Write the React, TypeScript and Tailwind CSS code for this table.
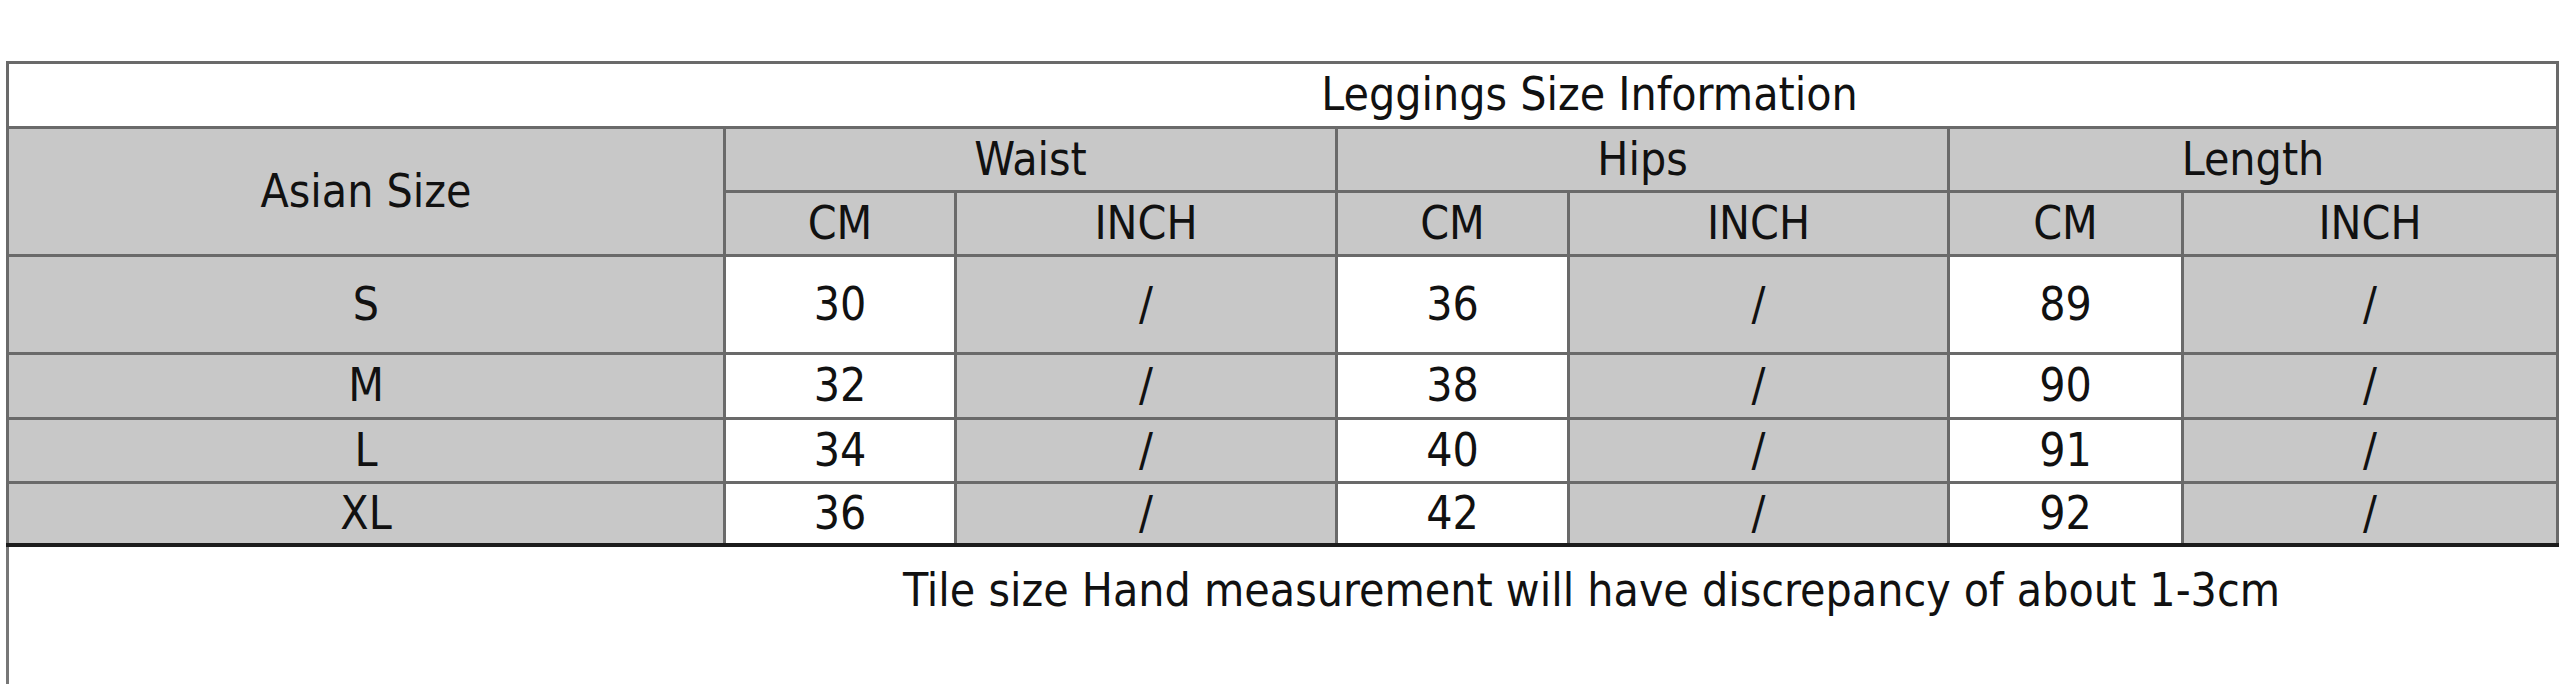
import React from "react";

const rows = [
  { size: "S", w: "30", h: "36", l: "89", tall: true },
  { size: "M", w: "32", h: "38", l: "90" },
  { size: "L", w: "34", h: "40", l: "91" },
  { size: "XL", w: "36", h: "42", l: "92" },
];

const gray = "bg-[#c8c8c8] flex items-center justify-center pb-[2px]";
const white = "bg-white flex items-center justify-center pb-[2px]";

export default function App() {
  return (
    <div className="w-[2560px] h-[684px] bg-white overflow-hidden text-[#111] font-['DejaVu_Sans_Condensed','DejaVu_Sans',sans-serif] [font-stretch:condensed] text-[46px] leading-none">
      <div className="pt-[61px] pl-[6px]">
        <div className="w-[2553px] bg-[#6a6a6a] p-[3px] pb-0 grid gap-[3px] grid-cols-[714px_228px_378px_229px_377px_231px_372px] grid-rows-[62px_61px_61px_95px_62px_61px_59px]">
          <div className="col-span-7 bg-white flex items-center justify-center pl-[614px] pb-[2px]">
            Leggings Size Information
          </div>
          <div className={`${gray} row-span-2`}>Asian Size</div>
          <div className={`${gray} col-span-2`}>Waist</div>
          <div className={`${gray} col-span-2`}>Hips</div>
          <div className={`${gray} col-span-2`}>Length</div>
          <div className={gray}>CM</div>
          <div className={gray}>INCH</div>
          <div className={gray}>CM</div>
          <div className={gray}>INCH</div>
          <div className={gray}>CM</div>
          <div className={gray}>INCH</div>
          {rows.map((r) => (
            <React.Fragment key={r.size}>
              <div className={gray}>{r.size}</div>
              <div className={white}>{r.w}</div>
              <div className={gray}>/</div>
              <div className={white}>{r.h}</div>
              <div className={gray}>/</div>
              <div className={white}>{r.l}</div>
              <div className={gray}>/</div>
            </React.Fragment>
          ))}
        </div>
        <div className="w-[2553px] h-[4px] bg-[#1c1c1c]" />
        <div className="w-[2554px] h-[137px] border-l-[3px] border-[#777777]">
          <div className="h-[86px] flex items-center justify-center pl-[614px]">
            Tile size Hand measurement will have discrepancy of about 1-3cm
          </div>
        </div>
      </div>
    </div>
  );
}
